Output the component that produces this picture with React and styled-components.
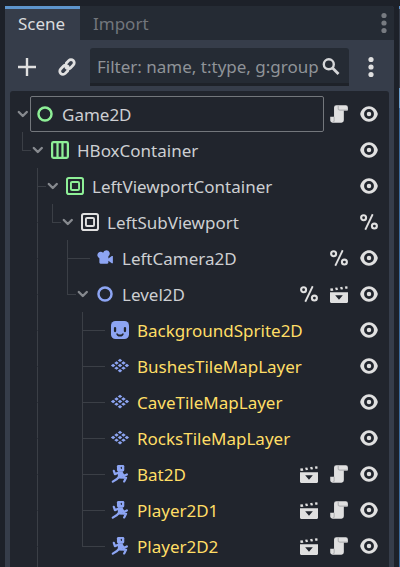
import React from "react";
import styled, { createGlobalStyle, css } from "styled-components";

const GlobalStyle = createGlobalStyle`
  * { box-sizing: border-box; }
  body {
    margin: 0;
    background: #1d2129;
    font-family: "Noto Sans", "Open Sans", sans-serif;
    font-size: 17px;
    color: #cdcfd2;
    overflow: hidden;
  }
`;

const Editor = styled.div`
  display: flex;
  gap: 5px;
  width: 400px;
  height: 567px;
  padding: 6px 0 0 5px;
  background: #1d2129;
  overflow: hidden;
`;

const Dock = styled.section`
  display: flex;
  flex-direction: column;
  width: 389px;
  flex: none;
  background: #363d4a;
  border-top-right-radius: 3px;
  overflow: hidden;
`;

const NeighbourDock = styled.div`
  width: 1px;
  flex: none;
  background: linear-gradient(#5d95cd 3px, #363d4a 3px 82px, #6a9fce 82px 102px, #3b6a9b 102px);
`;

const TabBar = styled.div`
  display: flex;
  height: 34px;
  flex: none;
  background: #252b34;
`;

const Tab = styled.div`
  height: 34px;
  padding: 1px 13px 0;
  line-height: 34px;
  color: #72767c;
  ${(p) =>
    p.$active &&
    css`
      width: 75px;
      background: #363d4a;
      color: #dadbdd;
      box-shadow: inset 0 3px 0 #5d95cd;
    `}
`;

const TabMenu = styled.div`
  display: flex;
  align-items: center;
  margin-left: auto;
  padding-right: 1px;
  color: #777b81;
`;

const Toolbar = styled.div`
  display: flex;
  align-items: center;
  height: 51px;
  flex: none;
  padding: 2px 14px 0 13px;
  color: #e0e0e0;
`;

const LinkSlot = styled.div`
  display: flex;
  margin-left: 22px;
`;

const Filter = styled.div`
  display: flex;
  align-items: center;
  justify-content: space-between;
  width: 259px;
  height: 38px;
  margin-left: 14px;
  padding: 2px 9px 0 7px;
  background: #252b34;
  border-bottom: 3px solid #1e2229;
  border-radius: 3px 3px 0 0;
  color: #8f9398;
  white-space: nowrap;
`;

const SearchSlot = styled.span`
  display: flex;
  padding-top: 1px;
  color: #d5d6d8;
`;

const MenuSlot = styled.div`
  display: flex;
  margin-left: auto;
`;

const Tree = styled.div`
  width: 379px;
  flex: 1;
  margin-left: 5px;
  padding: 5px 11px 0 5px;
  background: #21252d;
  border-radius: 3px 3px 0 0;
  overflow: hidden;
`;

const Row = styled.div`
  display: flex;
  align-items: center;
  height: 36px;
`;

const GUIDE = "#3b3f46";

const Guide = styled.span`
  display: flex;
  flex-direction: column;
  width: 15px;
  height: 36px;
  flex: none;
  padding-left: 7px;

  &::before,
  &::after {
    content: "";
    width: 8px;
    border-left: 1px solid ${(p) => (p.$kind === "blank" ? "transparent" : GUIDE)};
  }
  &::before {
    height: 19px;
    border-bottom: 1px solid
      ${(p) => (p.$kind === "tee" || p.$kind === "elbow" ? GUIDE : "transparent")};
  }
  &::after {
    height: 17px;
    border-left-color: ${(p) =>
      p.$kind === "tee" || p.$kind === "pipe" ? GUIDE : "transparent"};
  }
`;

const Fold = styled.span`
  display: flex;
  align-items: center;
  justify-content: center;
  width: 15px;
  flex: none;
`;

const Twig = styled.span`
  width: 15px;
  height: 1px;
  flex: none;
  margin-top: 1px;
  background: ${GUIDE};
`;

const TailGuide = styled.div`
  width: 1px;
  height: 40px;
  margin-left: 22px;
  background: ${GUIDE};
`;

const NodeCell = styled.div`
  display: flex;
  align-items: center;
  flex: 1;
  height: 36px;
  min-width: 0;
  padding-left: 5px;
  margin-right: 6px;
  border: 1px solid ${(p) => (p.$selected ? "#73777c" : "transparent")};
  border-radius: 2px;
`;

const NodeName = styled.span`
  margin-left: 8px;
  line-height: 34px;
  padding-top: 1px;
  white-space: nowrap;
  color: ${(p) => (p.$warm ? "#ffde66" : "#cdcfd2")};
`;

const Actions = styled.div`
  display: flex;
  gap: 12px;
  flex: none;
`;

const Glyph = styled.svg`
  display: block;
  flex: none;
  width: ${(p) => p.$size || 18}px;
  height: ${(p) => p.$size || 18}px;
  overflow: visible;
`;

const GREEN = "#8eef97";
const BLUE = "#8da5f3";
const WHITE = "#e0e0e0";
const BACK = "#21252d";

const Dots = () => (
  <Glyph viewBox="0 0 18 18" fill="currentColor">
    <circle cx="9" cy="1.5" r="2.6" />
    <circle cx="9" cy="9" r="2.6" />
    <circle cx="9" cy="16.5" r="2.6" />
  </Glyph>
);

const Chevron = () => (
  <Glyph $size={12} viewBox="0 0 12 12" fill="none" stroke="#86898e" strokeWidth="2.4" strokeLinecap="round" strokeLinejoin="round">
    <path d="M1.8 4l4 4 4-4" />
  </Glyph>
);

const ring = (color) => (
  <circle cx="8" cy="8" r="5.8" fill="none" stroke={color} strokeWidth="2.2" />
);

const viewport = (color) => (
  <g fill="none" stroke={color}>
    <rect x=".9" y=".9" width="14.2" height="14.2" rx="1.6" strokeWidth="1.8" />
    <rect x="4.4" y="4.4" width="7.2" height="7.2" rx="1" strokeWidth="1.7" />
  </g>
);

const TILES = [
  [8, 3],
  [4.9, 5.3], [11.1, 5.3],
  [1.9, 7.6], [8, 7.6], [14.1, 7.6],
  [4.9, 9.9], [11.1, 9.9],
  [8, 12.2],
];

const ICONS = {
  node2d: ring(BLUE),
  rootNode: ring(GREEN),
  hbox: (
    <g fill="none" stroke={GREEN} strokeWidth="2">
      <rect x="1" y="1" width="14" height="14" rx="1.2" />
      <path d="M5.8 1v14M10.2 1v14" />
    </g>
  ),
  viewportContainer: viewport(GREEN),
  subViewport: viewport(WHITE),
  camera: (
    <path
      fill={BLUE}
      d="M9.2 1a3 3 0 0 0-2.9 2.3A3 3 0 1 0 3 8.2V12a1 1 0 0 0 1 1h6a1 1 0 0 0 1-1v-1.6l3 2.2h1V6.3h-1l-3 2.2V6.4A3 3 0 0 0 9.2 1z"
    />
  ),
  sprite: (
    <g>
      <rect width="16" height="16" rx="4" fill={BLUE} />
      <g fill={BACK}>
        <rect x="2.6" y="5.3" width="2" height="4.6" rx="1" />
        <rect x="11.4" y="5.3" width="2" height="4.6" rx="1" />
        <path d="M4.6 11h1.5c.2.8.9 1.1 1.9 1.1s1.7-.3 1.9-1.1h1.5c-.1 1.8-1.5 2.8-3.4 2.8s-3.3-1-3.4-2.8z" />
      </g>
    </g>
  ),
  tilemap: (
    <g fill={BLUE}>
      {TILES.map(([x, y]) => (
        <path key={`${x}-${y}`} d={`M${x} ${y - 1.5}l2 1.5-2 1.5-2-1.5z`} />
      ))}
    </g>
  ),
  character: (
    <g fill="none" stroke={BLUE} strokeWidth="2" strokeLinecap="round" strokeLinejoin="round">
      <rect x="5.300" y="0" width="6.500" height="5.700" rx="1.200" fill={BLUE} stroke="none" />
      <path d="M2.500 5.200l1 2.900 3.500-1.400M9.900 7.400l1.300 2.300 2.900-1.300M7 10.600l-1.700 1.900-3.700 2.300M9 10.900l4.400.500-1.700 3.200" />
      <path d="M6.200 5.500h4.200l.3 3.500-1.500 3H6z" fill={BLUE} stroke="none" />
      <path d="M9.200 2v1.200" stroke={BACK} strokeWidth=".9" />
    </g>
  ),
  eye: (
    <path
      fill={WHITE}
      fillRule="evenodd"
      d="M8 1.2C4.3 1.2 1.4 4 .3 7.4a2 2 0 0 0 0 1.2C1.4 12 4.3 14.8 8 14.8s6.6-2.8 7.7-6.2a2 2 0 0 0 0-1.2C14.6 4 11.7 1.2 8 1.2zM8 3.6a4.4 4.4 0 1 1 0 8.8a4.4 4.4 0 0 1 0-8.8zM8 6a2 2 0 1 0 0 4a2 2 0 0 0 0-4z"
    />
  ),
  script: (
    <g>
      <path fill={WHITE} d="M5.6.2H14a2 2 0 0 1 1.9 2V4.6H12.3V13.6a2.2 2.2 0 0 1-2.2 2.2H2.4a2.2 2.2 0 0 1-2.2-2.2V10.5H3.6V2.2a2 2 0 0 1 2-2z" />
      <path fill="none" stroke="#b2b3b5" strokeWidth="1" d="M7.3.8V3a1.6 1.6 0 0 0 1.6 1.6h6.7M3.7 10.5v3.2a1.4 1.4 0 0 1-1.4 1.4M.5 10.8v2.9" />
    </g>
  ),
  percent: (
    <g fill="none" stroke={WHITE} strokeWidth="1.9">
      <circle cx="3.200" cy="4.200" r="2.200" />
      <circle cx="12.800" cy="11.600" r="2.200" />
      <path d="M11.300 1.100L4.700 14.900" strokeWidth="1.600" />
    </g>
  ),
  scene: (
    <g fill={WHITE}>
      <path fillRule="evenodd" d="M0 6.500h16v8.400a1 1 0 0 1-1 1H1a1 1 0 0 1-1-1zM4.600 9L8 13 11.400 9z" />
      <path d="M.2 3.100l2.200-.3.600 2.200-2.500.400zM4.500 2.500l2-.300.700 2.100-2 .300zM8.900 1.900l2-.300.700 2.100-2 .3zM13.200 1.300l2.200-.300.3 2.200-1.900.300z" />
    </g>
  ),
};

const Icon = ({ name }) => <Glyph viewBox="0 0 16 16">{ICONS[name]}</Glyph>;

const leafGuides = ["blank", "pipe", "blank", "blank", "tee"];
const lastGuides = ["blank", "pipe", "blank", "blank", "elbow"];

const NODES = [
  { name: "Game2D", icon: "rootNode", guides: [], open: true, selected: true, actions: ["script", "eye"] },
  { name: "HBoxContainer", icon: "hbox", guides: ["elbow"], open: true, actions: ["eye"] },
  { name: "LeftViewportContainer", icon: "viewportContainer", guides: ["blank", "tee"], open: true, actions: ["eye"] },
  { name: "LeftSubViewport", icon: "subViewport", guides: ["blank", "pipe", "elbow"], open: true, actions: ["percent"] },
  { name: "LeftCamera2D", icon: "camera", guides: ["blank", "pipe", "blank", "tee"], actions: ["percent", "eye"] },
  { name: "Level2D", icon: "node2d", guides: ["blank", "pipe", "blank", "elbow"], open: true, actions: ["percent", "scene", "eye"] },
  { name: "BackgroundSprite2D", icon: "sprite", guides: leafGuides, warm: true, actions: ["eye"] },
  { name: "BushesTileMapLayer", icon: "tilemap", guides: leafGuides, warm: true, actions: ["eye"] },
  { name: "CaveTileMapLayer", icon: "tilemap", guides: leafGuides, warm: true, actions: ["eye"] },
  { name: "RocksTileMapLayer", icon: "tilemap", guides: leafGuides, warm: true, actions: ["eye"] },
  { name: "Bat2D", icon: "character", guides: leafGuides, warm: true, actions: ["scene", "script", "eye"] },
  { name: "Player2D1", icon: "character", guides: leafGuides, warm: true, actions: ["scene", "script", "eye"] },
  { name: "Player2D2", icon: "character", guides: lastGuides, warm: true, actions: ["scene", "script", "eye"] },
];

function TreeRow({ node }) {
  return (
    <Row>
      {node.guides.map((kind, i) => (
        <Guide key={i} $kind={kind} />
      ))}
      {node.open ? <Fold><Chevron /></Fold> : <Twig />}
      <NodeCell $selected={node.selected}>
        <Icon name={node.icon} />
        <NodeName $warm={node.warm}>{node.name}</NodeName>
      </NodeCell>
      <Actions>
        {node.actions.map((a) => (
          <Icon key={a} name={a} />
        ))}
      </Actions>
    </Row>
  );
}

export default function App() {
  return (
    <>
      <GlobalStyle />
      <Editor>
        <Dock>
          <TabBar>
            <Tab $active>Scene</Tab>
            <Tab>Import</Tab>
            <TabMenu><Dots /></TabMenu>
          </TabBar>
          <Toolbar>
            <Glyph viewBox="0 0 18 18" stroke="currentColor" strokeWidth="2.4">
              <path d="M9 0v18M0 9h18" />
            </Glyph>
            <LinkSlot>
              <Glyph viewBox="0 0 18 18" fill="none" stroke="currentColor" strokeWidth="2.8" strokeLinecap="round">
                <path d="M8.2 5.2l2.500-2.600a3.100 3.100 0 0 1 4.600 4.500l-2.800 2.800a3.100 3.100 0 0 1-4.500-.3M9.800 12.800l-2.500 2.600a3.100 3.100 0 0 1-4.600-4.500l2.800-2.800a3.100 3.100 0 0 1 4.500.3" />
              </Glyph>
            </LinkSlot>
            <Filter>
              <span>Filter: name, t:type, g:group</span>
              <SearchSlot>
                <Glyph viewBox="0 0 18 18" fill="none" stroke="currentColor" strokeWidth="2.4">
                  <circle cx="6.8" cy="6.3" r="5" />
                  <path d="M10.3 9.8L16.500 16" strokeWidth="2.8" />
                </Glyph>
              </SearchSlot>
            </Filter>
            <MenuSlot><Dots /></MenuSlot>
          </Toolbar>
          <Tree>
            {NODES.map((node) => (
              <TreeRow key={node.name} node={node} />
            ))}
            <TailGuide />
          </Tree>
        </Dock>
        <NeighbourDock />
      </Editor>
    </>
  );
}
